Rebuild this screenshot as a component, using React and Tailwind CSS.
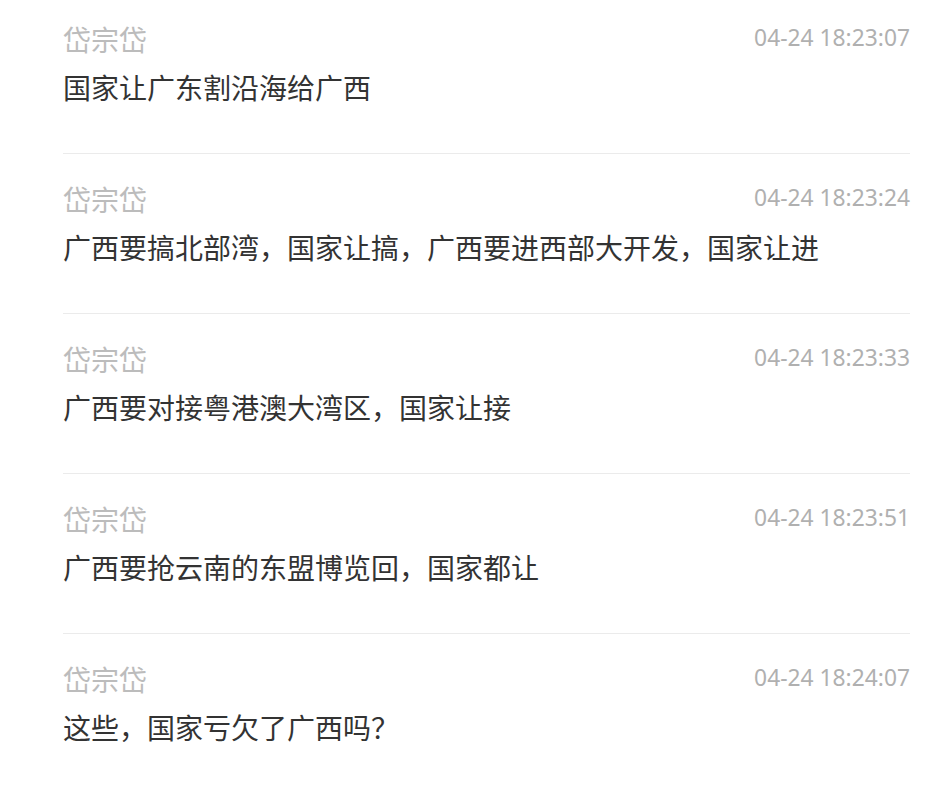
import React from "react";

const comments = [
  { name: "岱宗岱", time: "04-24 18:23:07", text: "国家让广东割沿海给广西" },
  { name: "岱宗岱", time: "04-24 18:23:24", text: "广西要搞北部湾，国家让搞，广西要进西部大开发，国家让进" },
  { name: "岱宗岱", time: "04-24 18:23:33", text: "广西要对接粤港澳大湾区，国家让接" },
  { name: "岱宗岱", time: "04-24 18:23:51", text: "广西要抢云南的东盟博览回，国家都让" },
  { name: "岱宗岱", time: "04-24 18:24:07", text: "这些，国家亏欠了广西吗？" },
];

const App = () => {
  return (
    <div
      className="w-full min-h-screen bg-white"
      style={{ fontFamily: '"Noto Sans", "Noto Sans CJK SC", sans-serif' }}
    >
      <div className="ml-[63px] mr-[32px]">
        {comments.map((c, i) => (
          <div
            key={i}
            className="pt-[28px] first:pt-[22px] pb-[45px] border-b border-[#ebebeb]"
          >
            <div className="flex justify-between items-start h-[36px]">
              <span className="text-[28px] leading-[36px] text-[#bcbcbc]">{c.name}</span>
              <span className="text-[22.8px] leading-[32px] text-[#b0b0b0]">{c.time}</span>
            </div>
            <div className="mt-[10px] text-[28px] leading-[40px] text-[#333333]">
              {c.text}
            </div>
          </div>
        ))}
      </div>
    </div>
  );
};

export default App;
